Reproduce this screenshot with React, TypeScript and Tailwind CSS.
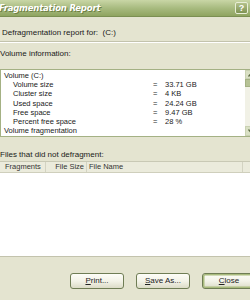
import React from 'react';

const volumeRows = [
  { label: 'Volume  (C:)', indent: false },
  { label: 'Volume size', indent: true, value: '33.71 GB' },
  { label: 'Cluster size', indent: true, value: '4 KB' },
  { label: 'Used space', indent: true, value: '24.24 GB' },
  { label: 'Free space', indent: true, value: '9.47 GB' },
  { label: 'Percent free space', indent: true, value: '28 %' },
  { label: 'Volume fragmentation', indent: false },
];

function XpButton({ hot, rest, isDefault }: { hot: string; rest: string; isDefault?: boolean }) {
  return (
    <button
      className={`w-[54px] h-[16px] shrink-0 rounded-[3px] border border-[#6f7d55] bg-gradient-to-b from-[#fdfdf8] via-[#f3f3e8] to-[#dcdcc8] text-[8px] text-[#222] flex items-center justify-center ${
        isDefault ? 'shadow-[inset_0_0_0_1.5px_#a9bb7d]' : ''
      }`}
    >
      <span>
        <span className="underline">{hot}</span>
        {rest}
      </span>
    </button>
  );
}

function Arrow({ up }: { up?: boolean }) {
  return (
    <svg width="7" height="5" viewBox="0 0 7 5">
      <path d={up ? 'M0.5 4.5 L3.5 1 L6.5 4.5' : 'M0.5 0.5 L3.5 4 L6.5 0.5'} fill="none" stroke="#5e6b44" strokeWidth="1.3" />
    </svg>
  );
}

export default function App() {
  return (
    <div
      className="w-[250px] h-[300px] overflow-hidden bg-[#e4e4d0] text-[#1a1a1a] flex flex-col"
      style={{ fontFamily: '"Liberation Sans", Arial, sans-serif' }}
    >
      {/* title bar */}
      <div className="h-[17px] shrink-0 flex items-center justify-between bg-gradient-to-b from-[#c9d6a6] via-[#a8bb80] to-[#8fa460] border-b border-[#7b8f52]">
        <span
          className="ml-[-1px] text-[8.5px] font-bold italic text-white tracking-[-0.2px] [text-shadow:1px_1px_0_#6d7f45]"
          style={{ fontFamily: '"DejaVu Sans", sans-serif' }}
        >
          Fragmentation Report
        </span>
        <div className="mr-[2px] w-[13px] h-[12px] rounded-[2px] border border-[#e8eed7] bg-gradient-to-b from-[#b4c28c] to-[#7f9354] flex items-center justify-center text-[9px] font-bold text-white leading-none">
          ?
        </div>
      </div>

      <div className="h-[24px] shrink-0 pt-[8px] flex items-center pl-[2px] text-[8px]">
        Defragmentation report for:&nbsp;&nbsp;(C:)
      </div>
      <div className="h-[2px] shrink-0 border-t border-[#c3c3ad] border-b border-b-white" />

      <div className="h-[26px] shrink-0 pb-[4px] flex items-center text-[8px]">
        Volume information:
      </div>

      {/* volume list */}
      <div className="h-[68px] w-[259px] shrink-0 flex bg-white border border-[#a4b184]">
        <div className="flex-1 flex flex-col pt-px text-[7.5px]">
          {volumeRows.map((row, i) => (
            <div key={i} className="h-[9.2px] flex items-center">
              <span className={`${row.indent ? 'pl-[12px]' : 'pl-[3px]'} w-[152px]`}>{row.label}</span>
              {row.value && (
                <>
                  <span className="w-[12px]">=</span>
                  <span>{row.value}</span>
                </>
              )}
            </div>
          ))}
        </div>
        <div className="w-[13px] flex flex-col bg-[#f1f1e6]">
          <div className="h-[9px] border border-[#c9d1b2] bg-[#d9e0c4] flex items-center justify-center">
            <Arrow up />
          </div>
          <div className="h-[8px] bg-[#b6c295] border border-[#a4b184]" />
          <div className="flex-1" />
          <div className="h-[10px] border border-[#c9d1b2] bg-[#d9e0c4] flex items-center justify-center">
            <Arrow />
          </div>
        </div>
      </div>

      <div className="h-[24px] shrink-0 pt-[12px] flex items-center text-[8px]">
        Files that did not defragment:
      </div>

      {/* file list header */}
      <div className="h-[12px] shrink-0 flex bg-[#ebebdc] border-t border-[#c9c9b5] border-b border-b-[#cfcfbc] text-[7.5px] text-[#333]">
        <div className="w-[46px] pl-[5px] flex items-center border-r border-[#d3d3c2]">Fragments</div>
        <div className="w-[41px] pr-[2px] flex items-center justify-end border-r border-[#d3d3c2]">File Size</div>
        <div className="w-[156px] pl-[2px] flex items-center border-r border-[#d3d3c2]">File Name</div>
        <div className="flex-1" />
      </div>
      <div className="h-[84px] shrink-0 bg-white border-b border-[#c3c3ad]" />

      {/* buttons */}
      <div className="flex-1 pt-[16px] pl-[70px] flex gap-[12px]">
        <XpButton hot="P" rest="rint..." />
        <XpButton hot="S" rest="ave As..." />
        <XpButton hot="C" rest="lose" isDefault />
      </div>
    </div>
  );
}
